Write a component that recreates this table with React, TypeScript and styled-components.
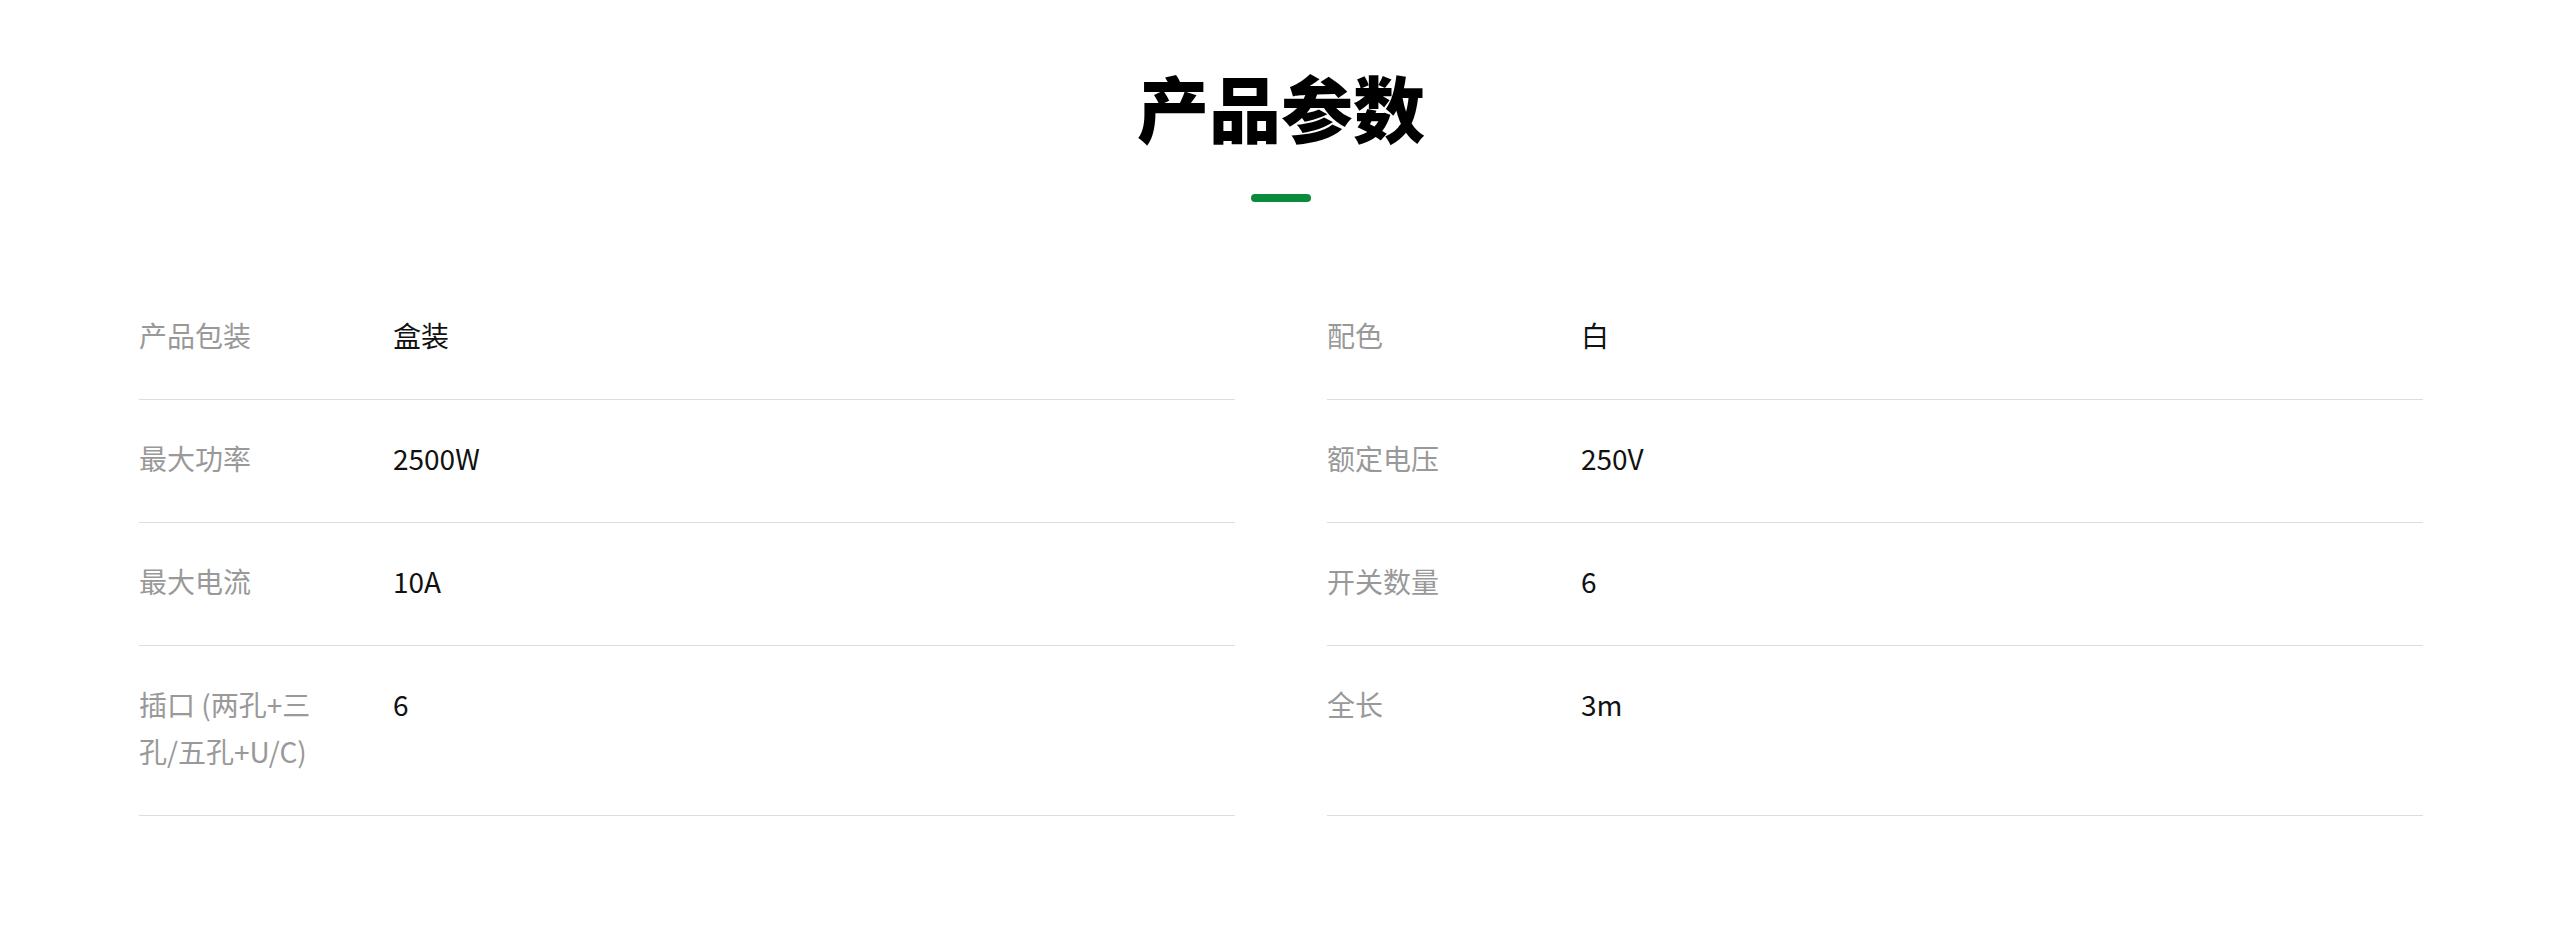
import React from "react";
import styled, { createGlobalStyle } from "styled-components";

const GlobalStyle = createGlobalStyle`
  html, body {
    margin: 0;
    padding: 0;
    background: #ffffff;
  }
  body {
    font-family: "Noto Sans CJK SC", "Noto Sans", sans-serif;
  }
`;

const Page = styled.section`
  width: 2284px;
  margin-left: 139px;
  padding-top: 52px;
  padding-bottom: 120px;
`;

const Header = styled.header`
  display: flex;
  flex-direction: column;
  align-items: center;
`;

const Title = styled.h2`
  margin: 0;
  font-size: 72px;
  line-height: 108px;
  font-weight: 900;
  color: #000000;
  letter-spacing: 0;
`;

const Accent = styled.span`
  display: block;
  width: 60px;
  height: 8px;
  border-radius: 4px;
  background: #0a8a3b;
  margin-top: 34px;
`;

const Grid = styled.div`
  display: grid;
  grid-template-columns: 1096px 1096px;
  column-gap: 92px;
  margin-top: 75px;
`;

const Row = styled.div`
  display: flex;
  align-items: flex-start;
  padding: 35px 0 40px;
  border-bottom: 1px solid #dddddd;
`;

const Label = styled.div`
  flex: 0 0 180px;
  margin-right: 74px;
  font-size: 28px;
  line-height: 47px;
  color: #999999;
`;

const Value = styled.div`
  flex: 1;
  font-size: 28px;
  line-height: 47px;
  color: #111111;
`;

const params: [string, string][] = [
  ["产品包装", "盒装"],
  ["配色", "白"],
  ["最大功率", "2500W"],
  ["额定电压", "250V"],
  ["最大电流", "10A"],
  ["开关数量", "6"],
  ["插口 (两孔+三孔/五孔+U/C)", "6"],
  ["全长", "3m"],
];

export default function App() {
  return (
    <>
      <GlobalStyle />
      <Page>
        <Header>
          <Title>产品参数</Title>
          <Accent />
        </Header>
        <Grid>
          {params.map(([k, v]) => (
            <Row key={k}>
              <Label>{k}</Label>
              <Value>{v}</Value>
            </Row>
          ))}
        </Grid>
      </Page>
    </>
  );
}
